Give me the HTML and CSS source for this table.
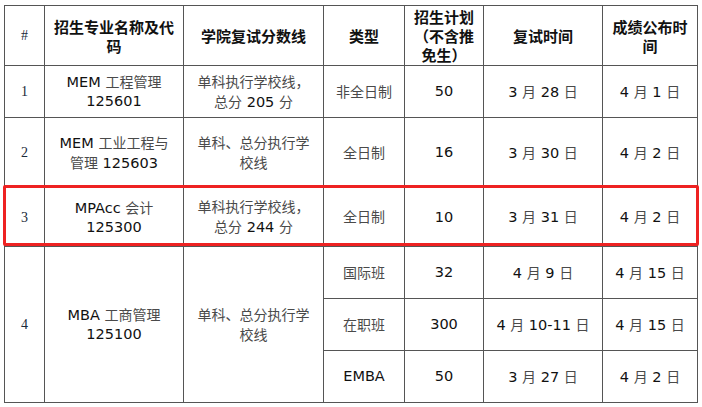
FILE: index.html
```html
<!DOCTYPE html>
<html lang="zh-CN">
<head>
<meta charset="utf-8">
<title>招生复试安排</title>
<link rel="stylesheet" href="styles.css">
</head>
<body>
<div class="wrap">
  <table class="plan">
    <colgroup>
      <col class="w-num"><col class="w-major"><col class="w-line"><col class="w-type"><col class="w-quota"><col class="w-date"><col class="w-pub">
    </colgroup>
    <thead>
      <tr class="h-head">
        <th class="num">#</th>
        <th>招生专业名称及代<br>码</th>
        <th>学院复试分数线</th>
        <th>类型</th>
        <th>招生计划<br>（不含推<br>免生）</th>
        <th>复试时间</th>
        <th>成绩公布时<br>间</th>
      </tr>
    </thead>
    <tbody>
      <tr class="h-1">
        <td class="num">1</td>
        <td>MEM <span class="c">工程管理</span><br>125601</td>
        <td><span class="c">单科执行学校线，</span><br><span class="c">总分</span> 205 <span class="c">分</span></td>
        <td><span class="c">非全日制</span></td>
        <td>50</td>
        <td>3 <span class="c">月</span> 28 <span class="c">日</span></td>
        <td>4 <span class="c">月</span> 1 <span class="c">日</span></td>
      </tr>
      <tr class="h-2">
        <td class="num">2</td>
        <td>MEM <span class="c">工业工程与</span><br><span class="c">管理</span> 125603</td>
        <td><span class="c">单科、总分执行学</span><br><span class="c">校线</span></td>
        <td><span class="c">全日制</span></td>
        <td>16</td>
        <td>3 <span class="c">月</span> 30 <span class="c">日</span></td>
        <td>4 <span class="c">月</span> 2 <span class="c">日</span></td>
      </tr>
      <tr class="h-3">
        <td class="num">3</td>
        <td>MPAcc <span class="c">会计</span><br>125300</td>
        <td><span class="c">单科执行学校线，</span><br><span class="c">总分</span> 244 <span class="c">分</span></td>
        <td><span class="c">全日制</span></td>
        <td>10</td>
        <td>3 <span class="c">月</span> 31 <span class="c">日</span></td>
        <td>4 <span class="c">月</span> 2 <span class="c">日</span></td>
      </tr>
      <tr class="h-4">
        <td class="num" rowspan="3">4</td>
        <td rowspan="3">MBA <span class="c">工商管理</span><br>125100</td>
        <td rowspan="3"><span class="c">单科、总分执行学</span><br><span class="c">校线</span></td>
        <td><span class="c">国际班</span></td>
        <td>32</td>
        <td>4 <span class="c">月</span> 9 <span class="c">日</span></td>
        <td>4 <span class="c">月</span> 15 <span class="c">日</span></td>
      </tr>
      <tr class="h-4">
        <td><span class="c">在职班</span></td>
        <td>300</td>
        <td>4 <span class="c">月</span> 10-11 <span class="c">日</span></td>
        <td>4 <span class="c">月</span> 15 <span class="c">日</span></td>
      </tr>
      <tr class="h-4">
        <td>EMBA</td>
        <td>50</td>
        <td>3 <span class="c">月</span> 27 <span class="c">日</span></td>
        <td>4 <span class="c">月</span> 2 <span class="c">日</span></td>
      </tr>
    </tbody>
  </table>
  <div class="highlight"></div>
</div>
</body>
</html>
```

FILE: styles.css
```css
html, body {
  margin: 0;
  padding: 0;
  background: #ffffff;
}

.wrap {
  position: relative;
  padding: 5px 0 0 4px;
}

.plan {
  border-collapse: collapse;
  table-layout: fixed;
  width: 694px;
  font-family: "DejaVu Sans", "Noto Sans CJK SC", sans-serif;
  font-size: 14.5px;
  line-height: 19px;
  color: #111;
}

.w-num { width: 40px; }
.w-major { width: 139px; }
.w-line { width: 140px; }
.w-type { width: 81px; }
.w-quota { width: 79px; }
.w-date { width: 119px; }
.w-pub { width: 95px; }

.plan th,
.plan td {
  border: 1px solid #555;
  padding: 0 5px;
  text-align: center;
  vertical-align: middle;
}

.plan th {
  font-family: "Noto Sans CJK SC", "DejaVu Sans", sans-serif;
  font-weight: bold;
  font-size: 15px;
  line-height: 19px;
  color: #111;
}

.plan .num {
  font-family: "Liberation Serif", "Noto Sans CJK SC", serif;
  font-weight: normal;
  font-size: 14px;
  color: #1a2a3a;
}

.c {
  font-family: "Noto Sans CJK SC", sans-serif;
  font-size: 14px;
  color: #4a4a4a;
}

.h-head { height: 60px; }
.h-1 { height: 52px; }
.h-2 { height: 70px; }
.h-3 { height: 59px; }
.h-4 { height: 52px; }

.highlight {
  position: absolute;
  left: 3px;
  top: 185px;
  width: 690px;
  height: 55px;
  border: 3px solid #ee2222;
  border-radius: 2px;
  pointer-events: none;
}
```
